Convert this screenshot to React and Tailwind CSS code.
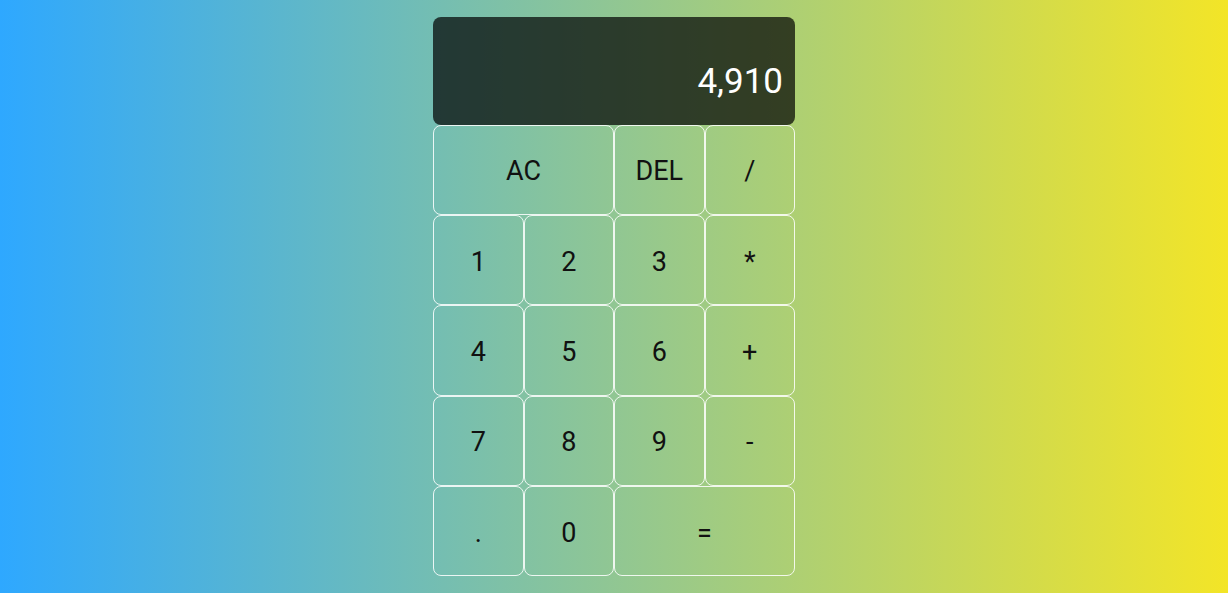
export default function App() {
  const btn =
    "flex items-center justify-center rounded-lg border border-white/85 bg-transparent pt-[4px] text-[27px] leading-none text-[#111]";
  const rows = [
    [["AC", "col-span-2"], ["DEL", ""], ["/", ""]],
    [["1", ""], ["2", ""], ["3", ""], ["*", ""]],
    [["4", ""], ["5", ""], ["6", ""], ["+", ""]],
    [["7", ""], ["8", ""], ["9", ""], ["-", ""]],
    [[".", ""], ["0", ""], ["=", "col-span-2"]],
  ];
  return (
    <div
      className="flex min-h-screen w-full items-center justify-center bg-[linear-gradient(to_right,#2ea8ff,#f3e527)]"
      style={{ fontFamily: "Roboto, 'Noto Sans', sans-serif" }}
    >
      <div className="grid w-[362px] grid-cols-4 grid-rows-[108px_repeat(5,90.4px)]">
        <div className="col-span-4 flex items-end justify-end rounded-lg bg-black/70 px-3 pb-[26px]">
          <span className="text-[35px] leading-none text-white">4,910</span>
        </div>
        {rows.flat().map(([label, span], i) => (
          <button key={i} className={`${btn} ${span}`}>
            {label}
          </button>
        ))}
      </div>
    </div>
  );
}
